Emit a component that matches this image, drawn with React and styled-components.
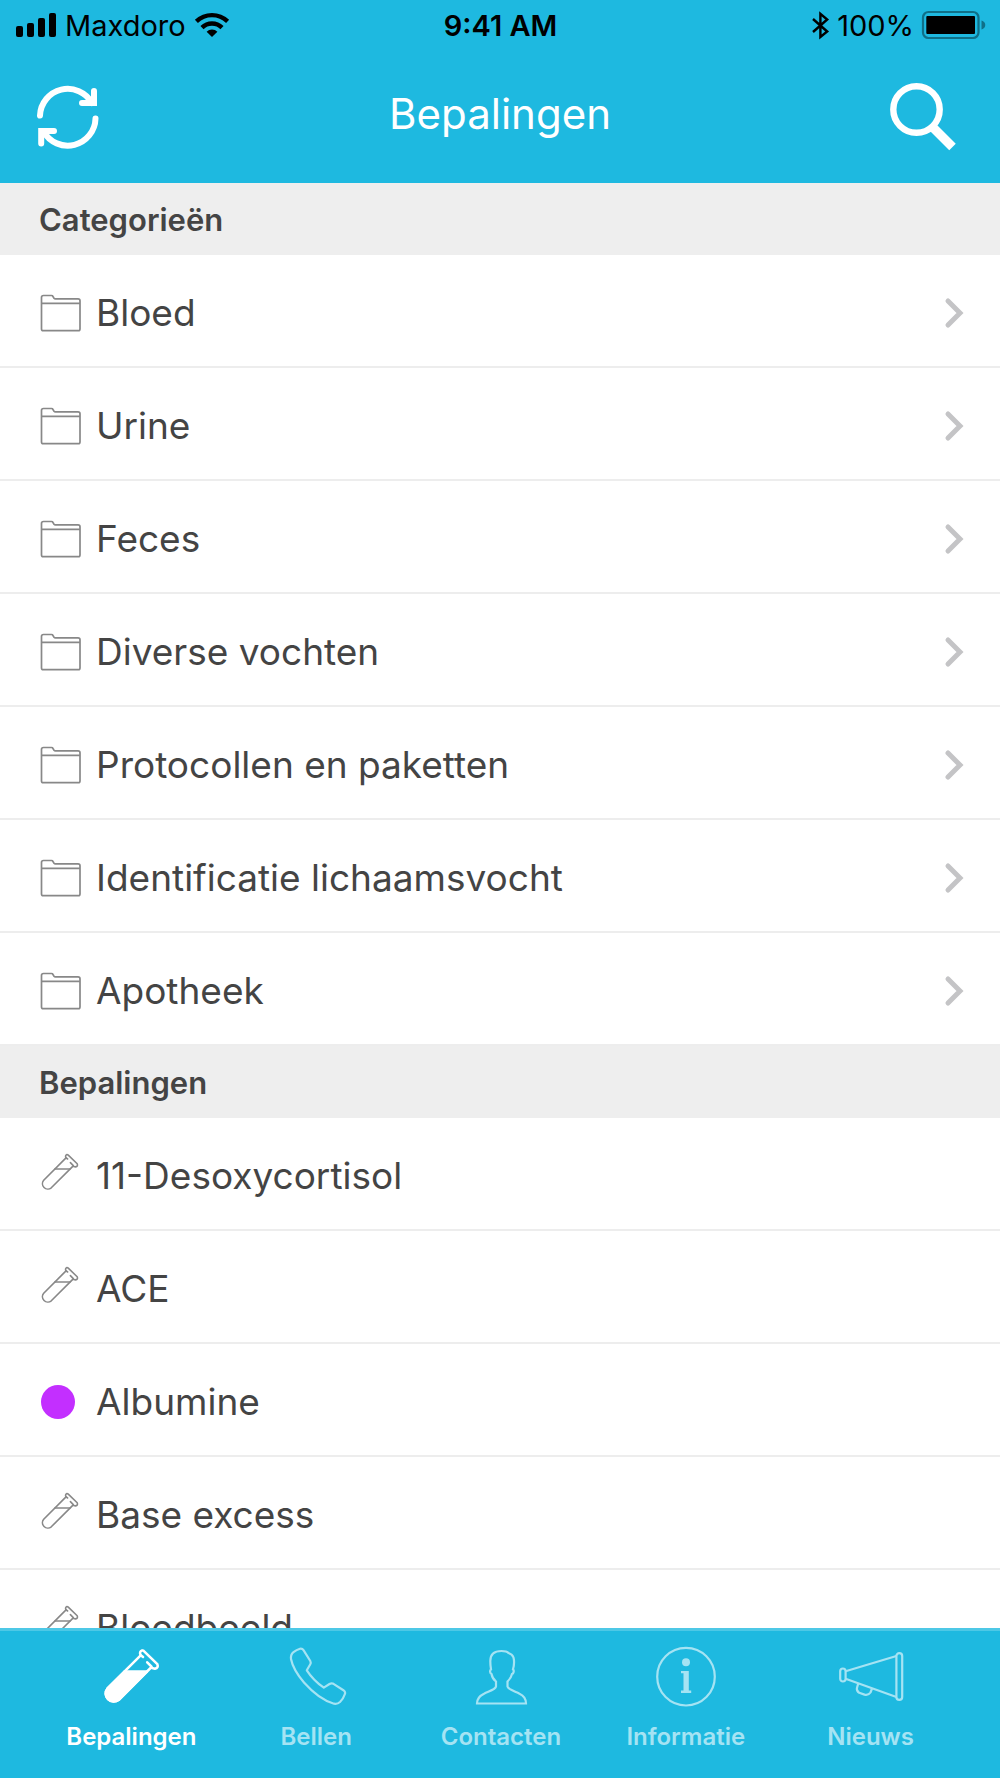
import React from 'react';
import styled, { createGlobalStyle } from 'styled-components'

const categories = [
  'Bloed',
  'Urine',
  'Feces',
  'Diverse vochten',
  'Protocollen en paketten',
  'Identificatie lichaamsvocht',
  'Apotheek',
]

const tests = [
  { name: '11-Desoxycortisol' },
  { name: 'ACE' },
  { name: 'Albumine', color: '#c32fff' },
  { name: 'Base excess' },
  { name: 'Bloedbeeld' },
]

const GlobalStyle = createGlobalStyle`
  * {
    box-sizing: border-box;
  }
  body {
    margin: 0;
    font-family: Inter, 'Liberation Sans', sans-serif;
    color: #444;
    background: #fff;
  }
  svg {
    display: block;
    flex-shrink: 0;
    overflow: visible;
  }
`

/* icons */

const SignalIcon = () => (
  <svg width='40' height='24' viewBox='0 0 40 24' aria-hidden='true'>
    <rect x='0' y='13' width='7' height='11' rx='2' />
    <rect x='11' y='10' width='7' height='14' rx='2' />
    <rect x='22' y='5' width='7' height='19' rx='2' />
    <rect x='33' y='0' width='7' height='24' rx='2' />
  </svg>
)

const WifiIcon = () => (
  <svg width='34' height='24' viewBox='0 0 34 24' aria-hidden='true'>
    <g fill='none' stroke='#000' strokeWidth='4.4'>
      <path d='M1.4 8.4a22.6 22.6 0 0 1 31.2 0' />
      <path d='M7 14.6a14.3 14.3 0 0 1 20 0' />
    </g>
    <path d='M17 24l-5.4-5.3a7.8 7.8 0 0 1 10.8 0z' />
  </svg>
)

const BluetoothIcon = () => (
  <svg width='17' height='29' viewBox='0 0 17 29' fill='none' stroke='#000' strokeWidth='2.4' aria-hidden='true'>
    <path d='M1 8L15.2 20.5L8.4 26V2.8L15.2 8.5L1 21' />
  </svg>
)

const BatteryIcon = () => (
  <svg width='63' height='28' viewBox='0 0 63 28' aria-hidden='true'>
    <rect x='1' y='1' width='55.5' height='26' rx='5.5' fill='none' stroke='#0f7088' strokeWidth='2.2' />
    <rect x='4.3' y='5' width='48.7' height='18' rx='1' />
    <path d='M59.5 9.5c5 1.5 5 7.5 0 9z' fill='#0f7088' />
  </svg>
)

const RefreshIcon = () => (
  <svg width='62' height='62' viewBox='0 0 62 62' fill='none' stroke='#fff' strokeWidth='6' strokeLinecap='round' aria-hidden='true'>
    <path d='M3 29.5A27.8 27.8 0 0 1 55 17' />
    <path d='M57 5v12H45' />
    <path d='M58.5 32.5A27.8 27.8 0 0 1 6.5 45.5' />
    <path d='M4.2 57.5V45H17' />
  </svg>
)

const SearchIcon = () => (
  <svg width='66' height='68' viewBox='0 0 66 68' fill='none' stroke='#fff' aria-hidden='true'>
    <circle cx='26.5' cy='26.5' r='23.2' strokeWidth='6.4' />
    <path d='M42 43.5L62.5 64' strokeWidth='9.2' />
  </svg>
)

const FolderIcon = () => (
  <svg width='42' height='38' viewBox='0 0 42 38' fill='none' stroke='#888' strokeWidth='1.7' aria-hidden='true'>
    <path d='M1.5 35V3.5Q1.5 1.5 3.5 1.5H11.5Q12.5 1.5 13 2.5L14 4.2Q14.5 4.8 15.5 4.8H38Q40 4.8 40 6.8V35Q40 36.7 38.3 36.7H3.2Q1.5 36.7 1.5 35Z' />
    <path d='M1.5 9.4H40' />
  </svg>
)

const TubeShape = () => (
  <>
    <path d='M26 4.9L3.7 27.2A5.4 5.4 0 0 0 11.3 34.8L33 13.1' />
    <path d='M27.6 6L25.9 4.7Q24.9 2.5 27 1.6L28 1.9L37.2 10.8Q38.2 13.4 35.6 13.9L33.6 13.5' />
    <path d='M30.4 9.6L33.3 12.6' />
    <path d='M15 16H30' />
  </>
)

const TubeIcon = () => (
  <svg
    width='39'
    height='45'
    viewBox='0 0 39 45'
    fill='none'
    stroke='#888'
    strokeWidth='1.6'
    strokeLinecap='round'
    strokeLinejoin='round'
    aria-hidden='true'
  >
    <TubeShape />
  </svg>
)

const FilledTubeIcon = () => (
  <svg
    width='58'
    height='58'
    viewBox='0 0 39 39'
    fill='none'
    stroke='#fff'
    strokeWidth='1.7'
    strokeLinecap='round'
    strokeLinejoin='round'
    aria-hidden='true'
  >
    <TubeShape />
    <path d='M15 16H30L11.3 34.8A5.4 5.4 0 0 1 3.7 27.2Z' fill='#fff' />
  </svg>
)

const ChevronIcon = () => (
  <svg width='18' height='30' viewBox='0 0 18 30' fill='none' stroke='#c4c4c6' strokeWidth='5' strokeLinecap='round' aria-hidden='true'>
    <path d='M3 3l12 12L3 27' />
  </svg>
)

const TabSvg = ({ children }) => (
  <svg width='60' height='60' viewBox='0 0 60 60' fill='none' stroke='currentColor' strokeWidth='2.2' strokeLinejoin='round' aria-hidden='true'>
    {children}
  </svg>
)

const PhoneIcon = () => (
  <TabSvg>
    <path d='M5 12Q4.5 7.5 7.5 5.2Q10.5 2.8 14 1.7Q16.2 1.2 17.5 3.2L24.3 14Q25.2 15.8 24.3 17.3L20.8 23.3Q27 33 37.8 40.7L43.5 37Q45.6 35.8 47.5 36.8L57.8 43.5Q59.7 45 58.9 47Q57.5 51.5 54 55Q51.5 57.3 48 56.7Q33 52.5 18 35.5Q7 22.5 5 12Z' />
  </TabSvg>
)

const PersonIcon = () => (
  <TabSvg>
    <path
      strokeLinejoin='miter'
      d='M6 56.5H55C55 52 52.5 48.5 48.5 46.7C43.5 44.2 37 42.5 36.5 39.5V34.5C39 32 40.5 29.5 41 27C42.6 26.5 43.4 23.5 42 22.3C43.2 18 43.4 14 42.5 10.5C41.5 7.5 39 6.5 37.5 6C36 4.2 33 4 30.5 4C23 4 19.3 8 19.3 14C19.3 17 19.6 20 20 22.3C18.5 23.5 19 26.5 20.5 27C21 30 22.5 32.5 25 34.5V39.5C24.5 42.5 18 44.2 13 46.7C8.5 48.8 6 52 6 56.5Z'
    />
  </TabSvg>
)

const InfoIcon = () => (
  <TabSvg>
    <circle cx='30' cy='29.7' r='28.8' />
    <circle cx='30' cy='15.3' r='4' fill='currentColor' stroke='none' />
    <path d='M25 24h7.8v19.5h2.4v2.5H25v-2.5h2.5V26.3H25z' fill='currentColor' stroke='none' />
  </TabSvg>
)

const MegaphoneIcon = () => (
  <TabSvg>
    <rect x='-.8' y='21.5' width='5.4' height='13' rx='2.7' />
    <rect x='55.4' y='6.2' width='5.8' height='46.6' rx='2.9' />
    <path d='M4.6 24.2L55.4 9M4.6 31.8L55.4 50' />
    <path d='M17.2 36.5L15.9 41.2Q15.5 44.3 18.2 45.8L23.5 47.6Q27.5 48.5 29.5 45.5L31 41.5' />
  </TabSvg>
)

const tabs = [
  { label: 'Bepalingen', icon: <FilledTubeIcon />, active: true },
  { label: 'Bellen', icon: <PhoneIcon /> },
  { label: 'Contacten', icon: <PersonIcon /> },
  { label: 'Informatie', icon: <InfoIcon /> },
  { label: 'Nieuws', icon: <MegaphoneIcon /> },
]

const App = () => {
  return (
    <Screen>
      <GlobalStyle />
      <Header>
        <StatusBar>
          <StatusGroup>
            <SignalIcon />
            <span>Maxdoro</span>
            <WifiIcon />
          </StatusGroup>
          <Clock>9:41 AM</Clock>
          <StatusGroup $end>
            <BluetoothIcon />
            <span>100%</span>
            <BatteryIcon />
          </StatusGroup>
        </StatusBar>
        <TitleBar>
          <IconButton type='button' aria-label='Vernieuwen'>
            <RefreshIcon />
          </IconButton>
          <Title>Bepalingen</Title>
          <IconButton type='button' aria-label='Zoeken' $end>
            <SearchIcon />
          </IconButton>
        </TitleBar>
      </Header>

      <Content>
        <SectionTitle>Categorieën</SectionTitle>
        <List>
          {categories.map((name) => (
            <li key={name}>
              <Row href='#'>
                <RowIcon>
                  <FolderIcon />
                </RowIcon>
                <RowLabel>{name}</RowLabel>
                <ChevronIcon />
              </Row>
            </li>
          ))}
        </List>
        <SectionTitle>Bepalingen</SectionTitle>
        <List>
          {tests.map(({ name, color }) => (
            <li key={name}>
              <Row href='#'>
                <RowIcon>{color ? <Dot $color={color} /> : <TubeIcon />}</RowIcon>
                <RowLabel>{name}</RowLabel>
              </Row>
            </li>
          ))}
        </List>
      </Content>

      <TabBar>
        {tabs.map(({ label, icon, active }) => (
          <Tab key={label} href='#' $active={active}>
            <TabIcon>{icon}</TabIcon>
            {label}
          </Tab>
        ))}
      </TabBar>
    </Screen>
  )
}

const Screen = styled.div`
  display: flex;
  flex-direction: column;
  height: 100vh;
`

const Header = styled.header`
  flex-shrink: 0;
  background: #1eb9e0;
`

const StatusBar = styled.div`
  display: grid;
  grid-template-columns: 1fr auto 1fr;
  align-items: center;
  height: 50px;
  padding: 0 15px 0 16px;
  font-size: 29px;
  color: #000;
`

const StatusGroup = styled.div`
  display: flex;
  align-items: center;
  justify-content: ${({ $end }) => ($end ? 'flex-end' : 'flex-start')};
  gap: ${({ $end }) => ($end ? '8px' : '9px')};
`

const Clock = styled.span`
  font-weight: 600;
`

const TitleBar = styled.div`
  display: grid;
  grid-template-columns: 1fr auto 1fr;
  align-items: center;
  height: 133px;
  padding: 0 37px;
`

const Title = styled.h1`
  margin: 0;
  padding-bottom: 6px;
  font-size: 42px;
  font-weight: 400;
  color: #fff;
`

const IconButton = styled.button`
  justify-self: ${({ $end }) => ($end ? 'end' : 'start')};
  padding: ${({ $end }) => ($end ? '0 7px 0 0' : '0')};
  border: 0;
  background: none;
  cursor: pointer;
`

const Content = styled.main`
  flex: 1;
  min-height: 0;
  overflow-y: auto;
  scrollbar-width: none;
`

const SectionTitle = styled.h2`
  display: flex;
  align-items: center;
  height: 72px;
  margin: 0;
  padding: 0 39px;
  font-size: 31px;
  font-weight: 600;
  background: #eee;
`

const List = styled.ul`
  margin: 0;
  padding: 0;
  list-style: none;
`

const Row = styled.a`
  display: flex;
  align-items: center;
  height: 113px;
  padding: 4px 37px 0 40px;
  border-bottom: 2px solid #ededed;
  color: inherit;
  text-decoration: none;
`

const RowIcon = styled.span`
  display: flex;
  width: 56px;
`

const RowLabel = styled.span`
  flex: 1;
  font-size: 37px;
`

const Dot = styled.span`
  width: 34px;
  height: 34px;
  margin-left: 1px;
  border-radius: 50%;
  background: ${({ $color }) => $color};
`

const TabBar = styled.nav`
  display: flex;
  flex-shrink: 0;
  padding: 16px 37px 25px 39px;
  border-top: 3px solid #4dc8e6;
  background: #1eb9e0;
`

const Tab = styled.a`
  display: flex;
  flex: 1;
  flex-direction: column;
  align-items: center;
  gap: 14px;
  font-size: 24px;
  font-weight: 600;
  line-height: 32px;
  text-decoration: none;
  color: ${({ $active }) => ($active ? '#fff' : '#a5e3f3')};
`

const TabIcon = styled.span`
  display: flex;
  align-items: center;
  justify-content: center;
  height: 60px;
`

export default App
